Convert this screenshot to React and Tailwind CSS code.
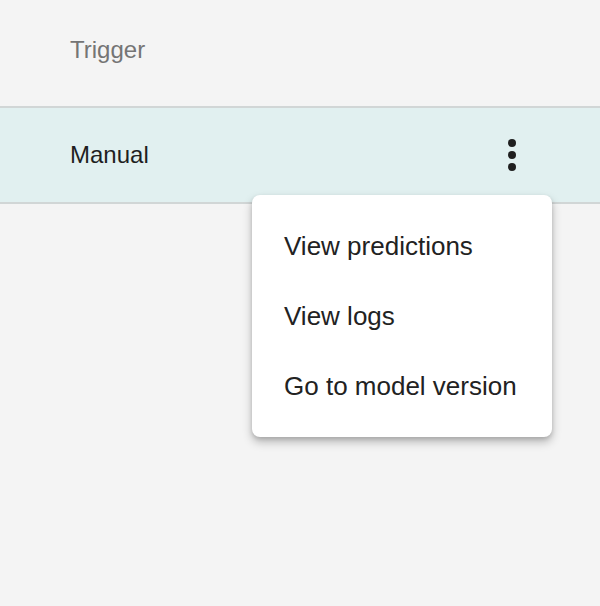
export default function App() {
  return (
    <div className="relative w-[600px] h-[606px] bg-[#f4f4f4] overflow-hidden" style={{ fontFamily: '"Liberation Sans", Arial, sans-serif' }}>
      <div className="h-[106px] flex items-center pl-[70px] pb-[6px] text-[24px] text-[#757575]">Trigger</div>
      <div className="h-[98px] border-y-2 border-[#d1d6d6] bg-[#e1f0f0] flex items-center justify-between pl-[70px] pr-[64px]">
        <span className="text-[24px] text-[#1f1f1f]">Manual</span>
        <svg width="48" height="48" viewBox="0 0 24 24" fill="#1f1f1f">
          <circle cx="12" cy="6" r="2" />
          <circle cx="12" cy="12" r="2" />
          <circle cx="12" cy="18" r="2" />
        </svg>
      </div>
      <div className="absolute left-[252px] top-[195px] w-[300px] py-[16px] bg-white rounded-[8px] shadow-[0_5px_10px_rgba(0,0,0,0.25),0_2px_4px_rgba(0,0,0,0.12)]">
        {["View predictions", "View logs", "Go to model version"].map((t) => (
          <div key={t} className="h-[70px] flex items-center pl-[32px] text-[26px] text-[#222222]">{t}</div>
        ))}
      </div>
    </div>
  );
}
